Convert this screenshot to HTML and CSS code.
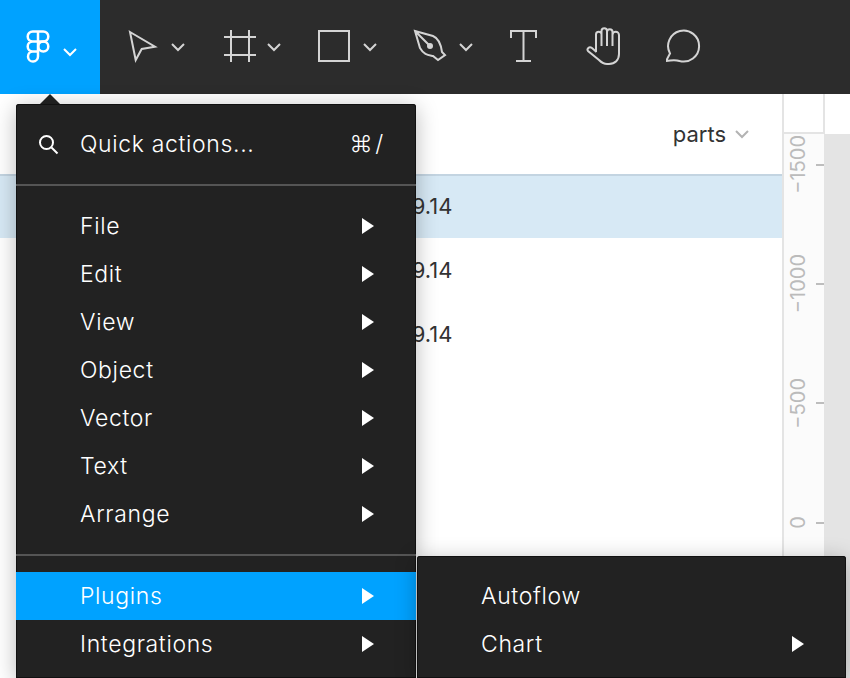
FILE: index.html
```html
<!DOCTYPE html>
<html lang="en">

<head>
    <meta charset="UTF-8">
    <meta name="viewport" content="width=device-width, initial-scale=1.0">
    <title>Figma menu</title>
    <link rel="stylesheet" href="styles.css">
</head>

<body>

    <header class="toolbar">
        <div class="logo">
            <svg class="logo-mark" viewBox="0 0 24 34" width="24" height="34">
                <path d="M12 1.500H6.700a5 5 0 0 0 0 10H12zM12 1.500h5.300a5 5 0 0 1 0 10H12zM12 11.500H6.700a5 5 0 0 0 0 10H12zM12 21.500H6.700a5 5 0 1 0 5.300 5z" />
                <circle cx="17.300" cy="16.500" r="5" />
            </svg>
            <svg class="chev chev-logo" viewBox="0 0 16 16" width="16" height="16"><path d="M2 5l6 6 6-6" /></svg>
        </div>
        <div class="tools">
            <div class="tool">
                <svg class="icon" viewBox="0 0 40 40" width="40" height="40"><path d="M8 5l25 14.700-13.300 2.300-6 11z" /></svg>
                <svg class="chev" viewBox="0 0 16 16" width="16" height="16"><path d="M2 5l6 6 6-6" /></svg>
            </div>
            <div class="tool">
                <svg class="icon" viewBox="0 0 40 40" width="40" height="40"><path d="M13 3v32M31 3v32M6 10h32M6 28h32" /></svg>
                <svg class="chev" viewBox="0 0 16 16" width="16" height="16"><path d="M2 5l6 6 6-6" /></svg>
            </div>
            <div class="tool">
                <svg class="icon" viewBox="0 0 40 40" width="40" height="40"><rect x="5" y="4" width="30" height="30" /></svg>
                <svg class="chev" viewBox="0 0 16 16" width="16" height="16"><path d="M2 5l6 6 6-6" /></svg>
            </div>
            <div class="tool">
                <svg class="icon" viewBox="0 0 40 40" width="40" height="40">
                    <path d="M5 4l18 5c5 2 8 9 9 16l3 3-7 5-5-4c-5-1-9-1-13-8zM5 4l15 15" />
                    <circle class="dot" cx="20" cy="19" r="3" />
                </svg>
                <svg class="chev" viewBox="0 0 16 16" width="16" height="16"><path d="M2 5l6 6 6-6" /></svg>
            </div>
            <div class="tool tool-plain">
                <svg class="icon" viewBox="0 0 40 40" width="40" height="40"><path d="M5 11V4h25v7M17.500 4v30M10 34h15" /></svg>
            </div>
            <div class="tool tool-plain">
                <svg class="icon" viewBox="0 0 40 40" width="40" height="40">
                    <path d="M10 25V7.500a2.750 2.750 0 0 1 5.500 0V19M15.500 19V4a2.750 2.750 0 0 1 5.500 0v15M21 19V5a2.750 2.750 0 0 1 5.500 0v14M26.500 19V8a3.250 3.250 0 0 1 6.500 0v19c0 6-4 10-10 10h-2c-4 0-6-2-8-4l-11-9c-1.500-2 1-5 4-3l4.500 4" />
                </svg>
            </div>
            <div class="tool tool-plain">
                <svg class="icon" viewBox="0 0 40 40" width="40" height="40"><path d="M4 26.500A15.500 15.500 0 1 1 13.500 34c-4-1.500-8-1-13.500 0z" /></svg>
            </div>
        </div>
    </header>

    <main class="stage">
        <section class="list">
            <div class="list-head">
                <span>parts</span>
                <svg class="chev chev-gray" viewBox="0 0 16 16" width="16" height="16"><path d="M2 5l6 6 6-6" /></svg>
            </div>
            <div class="row row-selected">2020.09.14</div>
            <div class="row">2020.09.14</div>
            <div class="row">2020.09.14</div>
        </section>

        <section class="side">
            <div class="side-top">
                <div class="corner"></div>
            </div>
            <div class="side-body">
                <div class="ruler">
                    <div class="mark"><span>−1500</span><i></i></div>
                    <div class="mark"><span>−1000</span><i></i></div>
                    <div class="mark"><span>−500</span><i></i></div>
                    <div class="mark"><span>0</span><i></i></div>
                </div>
            </div>
        </section>
    </main>

    <!-- dropdown sits over the page -->
    <div class="caret"></div>
    <nav class="menu">
        <div class="quick">
            <svg class="search" viewBox="0 0 22 22" width="22" height="22"><circle cx="9.500" cy="9.500" r="6.500" /><path d="M14.500 14.500l6 6" /></svg>
            <span class="quick-label">Quick actions...</span>
            <span class="shortcut">⌘ /</span>
        </div>
        <div class="group">
            <div class="item">File<b class="arrow"></b></div>
            <div class="item">Edit<b class="arrow"></b></div>
            <div class="item">View<b class="arrow"></b></div>
            <div class="item">Object<b class="arrow"></b></div>
            <div class="item">Vector<b class="arrow"></b></div>
            <div class="item">Text<b class="arrow"></b></div>
            <div class="item">Arrange<b class="arrow"></b></div>
        </div>
        <div class="group">
            <div class="item active">Plugins<b class="arrow"></b></div>
            <div class="item">Integrations<b class="arrow"></b></div>
        </div>
    </nav>

    <nav class="submenu">
        <div class="item">Autoflow</div>
        <div class="item">Chart<b class="arrow"></b></div>
    </nav>

</body>

</html>
```

FILE: styles.css
```css
* {
    margin: 0;
    padding: 0;
    box-sizing: border-box;
}

body {
    width: 850px;
    height: 678px;
    overflow: hidden;
    position: relative;
    background: #fff;
    color: #333;
    font-family: Inter, "Liberation Sans", sans-serif;
    font-size: 22px;
}

.toolbar {
    display: flex;
    height: 94px;
    background: #2c2c2c;
}

.logo {
    display: flex;
    align-items: center;
    width: 100px;
    padding-left: 26px;
    gap: 12px;
    background: #00a2ff;
}

.logo-mark {
    fill: none;
    stroke: #fff;
    stroke-width: 2.500;
}

.tools {
    display: flex;
    padding-left: 22px;
}

.tool {
    display: flex;
    align-items: center;
    gap: 8px;
    width: 96px;
}

.tool-plain {
    width: 80px;
}

.icon {
    fill: none;
    stroke: #d4d4d4;
    stroke-width: 2;
}

.icon .dot {
    fill: #d4d4d4;
    stroke: none;
}

.chev {
    fill: none;
    stroke: #d4d4d4;
    stroke-width: 2;
}

.chev-logo {
    stroke: #fff;
    margin-top: 10px;
}

.chev-gray {
    stroke: #b3b3b3;
}

.stage {
    display: flex;
    height: 584px;
}

.list {
    width: 782px;
}

.list-head {
    display: flex;
    align-items: center;
    justify-content: flex-end;
    gap: 8px;
    height: 80px;
    padding-right: 32px;
}

.row {
    height: 64px;
    line-height: 64px;
    padding-left: 338px;
    white-space: nowrap;
}

.row-selected {
    line-height: 60px;
    background: #d7e9f5;
    border-top: 2px solid #c3d4e1;
}

.side {
    width: 68px;
}

.side-top {
    height: 40px;
    background: #fff;
    border-left: 2px solid #e4e4e4;
}

.corner {
    width: 41px;
    height: 40px;
    border-right: 2px solid #e4e4e4;
    border-bottom: 2px solid #e4e4e4;
}

.side-body {
    height: 544px;
    background: #e4e4e4;
}

.ruler {
    width: 42px;
    height: 544px;
    background: #fbfbfb;
    border-left: 2px solid #e4e4e4;
    overflow: hidden;
}

.mark {
    display: flex;
    align-items: center;
    justify-content: flex-end;
    gap: 6px;
    height: 119.300px;
    color: #bbb;
    font-size: 20px;
    position: relative;
    top: -29px;
}

.mark span {
    writing-mode: vertical-rl;
    transform: rotate(180deg);
    white-space: nowrap;
}

.mark i {
    display: block;
    width: 8px;
    height: 2px;
    background: #bdbdbd;
}

.caret {
    position: absolute;
    left: 40px;
    top: 94px;
    border-left: 10px solid transparent;
    border-right: 10px solid transparent;
    border-bottom: 10px solid #222;
}

.menu {
    position: absolute;
    left: 16px;
    top: 104px;
    width: 400px;
    height: 574px;
    overflow: hidden;
    background: #222;
    color: #fff;
    font-size: 23px;
    letter-spacing: .65px;
    font-weight: 300;
    border-radius: 3px 3px 0 0;
    box-shadow: inset 0 0 0 1px #111, 0 4px 22px rgba(0, 0, 0, .28);
}

.quick {
    display: flex;
    align-items: center;
    height: 80px;
    padding: 0 32px 0 21px;
}

.search {
    fill: none;
    stroke: #fff;
    stroke-width: 2;
    margin-right: 21px;
}

.quick-label {
    flex: 1;
}

.shortcut {
    word-spacing: -5px;
}

.group {
    padding: 16px 0;
    border-top: 2px solid #555;
}

.item {
    display: flex;
    align-items: center;
    justify-content: space-between;
    height: 48px;
    padding: 0 42px 0 64px;
}

.active {
    background: #00a2ff;
}

.arrow {
    border-left: 12px solid #fff;
    border-top: 8px solid transparent;
    border-bottom: 8px solid transparent;
}

.submenu {
    position: absolute;
    left: 417px;
    top: 556px;
    width: 429px;
    height: 122px;
    padding-top: 16px;
    overflow: hidden;
    background: #222;
    color: #fff;
    font-size: 23px;
    letter-spacing: .65px;
    font-weight: 300;
    border-radius: 3px 3px 0 0;
    box-shadow: inset 0 0 0 1px #111, 0 4px 22px rgba(0, 0, 0, .28);
}
```
